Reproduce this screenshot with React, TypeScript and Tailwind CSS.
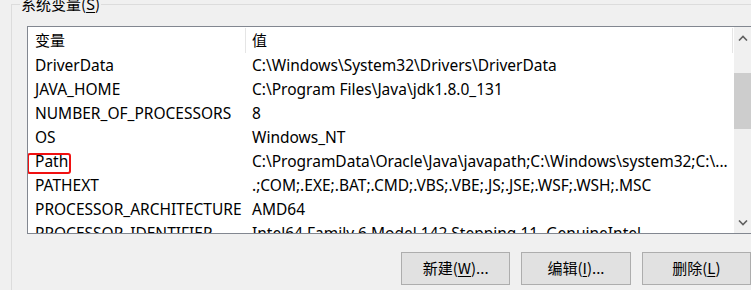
import React from 'react';

const rows: [string, string][] = [
  ['DriverData', 'C:\\Windows\\System32\\Drivers\\DriverData'],
  ['JAVA_HOME', 'C:\\Program Files\\Java\\jdk1.8.0_131'],
  ['NUMBER_OF_PROCESSORS', '8'],
  ['OS', 'Windows_NT'],
  ['Path', 'C:\\ProgramData\\Oracle\\Java\\javapath;C:\\Windows\\system32;C:\\...'],
  ['PATHEXT', '.;COM;.EXE;.BAT;.CMD;.VBS;.VBE;.JS;.JSE;.WSF;.WSH;.MSC'],
  ['PROCESSOR_ARCHITECTURE', 'AMD64'],
  ['PROCESSOR_IDENTIFIER', 'Intel64 Family 6 Model 142 Stepping 11, GenuineIntel'],
];

const Chevron = ({ up }: { up?: boolean }) => (
  <svg width="10" height="6" viewBox="0 0 10 6" className="text-[#606060]">
    <path d={up ? 'M1 5.5 L5 1.5 L9 5.5' : 'M1 0.5 L5 4.5 L9 0.5'} fill="none" stroke="currentColor" strokeWidth="1.6" />
  </svg>
);

const WinButton = ({ label, hotkey, suffix }: { label: string; hotkey: string; suffix: string }) => (
  <button className="w-[111px] h-[33px] bg-[#e1e1e1] border border-[#adadad] text-[15px] text-black flex items-center justify-center">
    {label}(<span className="underline underline-offset-2">{hotkey}</span>){suffix}
  </button>
);

export default function App() {
  return (
    <div className="w-[751px] h-[290px] overflow-hidden bg-[#f0f0f0] text-black font-['Noto_Sans','Noto_Sans_CJK_SC',sans-serif]">
      <div className="relative ml-[11px] mt-[4px] h-[400px] border-l border-t border-[#dcdcdc] pl-[15px] pt-[21px]">
        <span className="absolute left-[8px] top-[-11px] bg-[#f0f0f0] px-px text-[15px] leading-[20px] font-['Noto_Sans_CJK_SC',sans-serif]">
          系统变量(<span className="underline underline-offset-2">S</span>)
        </span>

        <div className="flex w-[725px] h-[208px] border border-[#828790] bg-white text-[15.5px]">
          <div className="flex-1 overflow-hidden">
            <div className="flex h-[27px] items-center">
              <div className="w-[217px] pl-[7px] text-[15px]">变量</div>
              <div className="w-px h-[25px] bg-[#e5e5e5]" />
              <div className="flex-1 pl-[6px] text-[15px]">值</div>
              <div className="w-px h-[25px] bg-[#e5e5e5] mr-px" />
            </div>
            {rows.map(([name, value]) => (
              <div key={name} className="flex h-[24px] items-center whitespace-nowrap">
                <div className="relative h-full w-[218px] pl-[7px] flex items-center">
                  {name}
                  {name === 'Path' && (
                    <div className="absolute left-[-1px] top-[3px] w-[44px] h-[21px] border-2 border-[#f01010] rounded-[3px]" />
                  )}
                </div>
                <div className="flex-1 pl-[6px]">{value}</div>
              </div>
            ))}
          </div>
          <div className="w-[17px] bg-[#f0f0f0] flex flex-col">
            <div className="h-[21px] flex items-center justify-center">
              <Chevron up />
            </div>
            <div className="flex-1 pt-[25px]">
              <div className="h-[56px] bg-[#cdcdcd]" />
            </div>
            <div className="h-[21px] flex items-center justify-center">
              <Chevron />
            </div>
          </div>
        </div>

        <div className="flex gap-[11px] mt-[18px] ml-[374px] font-['Noto_Sans_CJK_SC','Noto_Sans',sans-serif]">
          <WinButton label="新建" hotkey="W" suffix="..." />
          <WinButton label="编辑" hotkey="I" suffix="..." />
          <WinButton label="删除" hotkey="L" suffix="" />
        </div>
      </div>
    </div>
  );
}
